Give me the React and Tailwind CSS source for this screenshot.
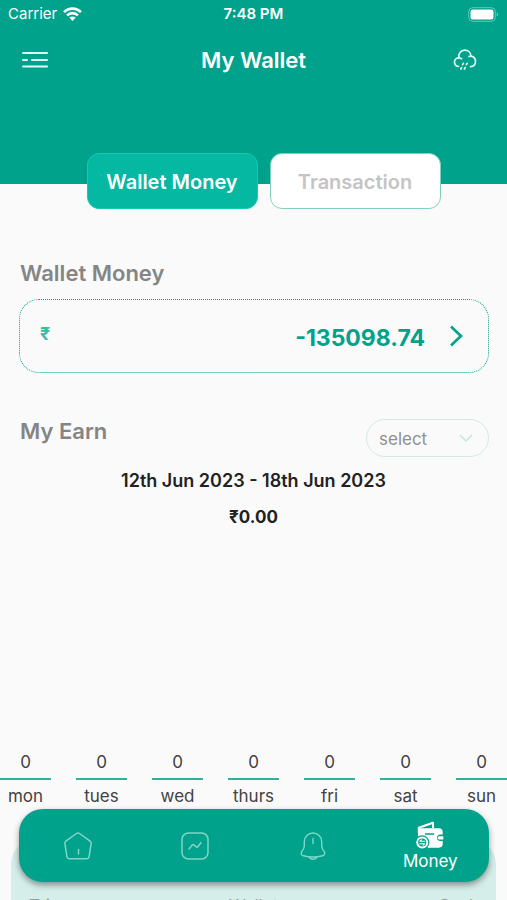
import React, { useState } from 'react';

const DAYS = ['mon', 'tues', 'wed', 'thurs', 'fri', 'sat', 'sun'];

const WifiIcon = () => (
  <svg width="19" height="14" viewBox="0 0 19 14" fill="none" stroke="#fff" strokeWidth="2.600">
    <path d="M1 5.2C5.8.4 13.2.4 18 5.2" />
    <path d="M4 8.4c3.2-3 7.8-3 11 0" />
    <path d="M9.500 14 6.300 10.600c1.800-1.600 4.600-1.600 6.400 0z" fill="#fff" stroke="none" />
  </svg>
);

const BatteryIcon = () => (
  <svg width="31" height="15" viewBox="0 0 31 15">
    <rect x="0.700" y="0.700" width="26.600" height="13.600" rx="4" fill="none" stroke="#fff" strokeOpacity="0.4" />
    <rect x="2.500" y="2.500" width="23" height="10" rx="2.300" fill="#fff" />
    <path d="M28.800 5.500v4c1.600-.6 1.600-3.400 0-4z" fill="#fff" fillOpacity="0.5" />
  </svg>
);

const MenuIcon = () => (
  <svg width="26" height="18" viewBox="0 0 26 18" stroke="#e0fbf5" strokeWidth="2" strokeLinecap="round">
    <path d="M1 2h24M1 9h4M10 9h15M1 15.500h24" />
  </svg>
);

const CloudIcon = () => (
  <svg width="24" height="22" viewBox="0 0 24 22" fill="none" stroke="#e0fbf5" strokeWidth="1.700" strokeLinecap="round" strokeLinejoin="round">
    <path d="M5.500 17.500C3 17.200 1.500 15.300 1.500 13s1.700-4.200 4.500-4.200C4.800 4.600 8 1.200 11.700 1.200c3.500 0 6.200 2.500 6.300 6 2.600.4 4.500 2.500 4.500 5.200 0 2.900-2 4.900-5 5.200" />
    <path d="M6 9c1 0 1.900.3 2.600.8M18 7.200c-.7 0-1.300.1-1.900.4" />
    <path d="M10.400 14.300l-.8 1.400M14.200 14.300l-.8 1.400M8.600 18.600l-.8 1.400M12.200 18.600l-.8 1.400" />
  </svg>
);

const HomeIcon = () => (
  <svg width="28" height="28" viewBox="0 0 28 28" fill="none" stroke="currentColor" strokeWidth="1.500" strokeLinecap="round" strokeLinejoin="round">
    <path d="M12.400 1.500 1.900 9.100c-.8.600-1.200 1.500-1 2.500l2 12.900c.2 1.400 1.200 2.300 2.600 2.300h17c1.400 0 2.400-.9 2.600-2.300l2-12.900c.2-1-.2-1.900-1-2.500L15.600 1.500c-1-.7-2.200-.7-3.200 0z" />
    <path d="M14.500 17.500v4.500" />
  </svg>
);

const ChartIcon = () => (
  <svg width="28" height="28" viewBox="0 0 28 28" fill="none" stroke="currentColor" strokeWidth="1.500" strokeLinecap="round" strokeLinejoin="round">
    <rect x="1" y="1" width="26" height="26" rx="6.500" />
    <path d="M8 17l3.200-4c.4-.5 1-.5 1.500-.2l2.600 2.100c.5.4 1.100.3 1.500-.2L20 10.700" />
  </svg>
);

const BellIcon = () => (
  <svg width="26" height="28" viewBox="0 0 26 28" fill="none" stroke="currentColor" strokeWidth="1.400" strokeLinecap="round" strokeLinejoin="round">
    <path d="M13 1C8.200 1 4.300 4.900 4.300 9.700v4.100c0 .9-.4 2.200-.8 3L1.700 19.600c-1 1.800-.3 3.600 1.600 4.200 6.300 1.600 13.100 1.600 19.400 0 1.800-.5 2.600-2.500 1.600-4.200l-1.800-2.800c-.4-.8-.8-2.100-.8-3V9.700C21.700 4.900 17.800 1 13 1z" />
    <path d="M9.200 24.800c.5 1.600 2 2.500 3.800 2.500s3.300-.9 3.800-2.500M13 6.500v5" />
  </svg>
);

const WalletIcon = () => (
  <svg width="28" height="28" viewBox="0 0 28 28" fill="none" strokeLinejoin="round">
    <path d="M2.800 12V6.800L17 1.800v5.500" stroke="#fff" strokeWidth="2" />
    <path d="M2 9.500c0-1.400 1-2.200 2.400-2.200H23c2.200 0 3.700 1.400 3.700 3.400v2.800h-2.400c-2 0-3.400 1.400-3.400 3.200s1.400 3.200 3.400 3.200h2.400v3.200c0 2.200-1.500 3.600-3.700 3.600H12L2 15z" fill="#fff" />
    <path d="M23.300 15.300h4v3.200h-4c-2.200 0-2.200-3.200 0-3.200z" fill="#fff" />
    <path d="M9.500 13h8" stroke="#00a28b" strokeWidth="1.600" strokeLinecap="round" />
    <circle cx="6.200" cy="21.500" r="7.200" fill="#00a28b" />
    <circle cx="6.200" cy="21.500" r="5" fill="#00a28b" stroke="#fff" strokeWidth="1.900" />
    <path d="M8.700 20.200H3.900l1.500-1.300M3.800 22.800h4.800l-1.500 1.300" stroke="#fff" strokeWidth="1.100" strokeLinecap="round" />
  </svg>
);

const Header = () => (
  <header className="h-[184px] shrink-0 bg-[#00a28b] text-white">
    <div className="grid grid-cols-3 items-center h-7 px-2">
      <div className="flex items-center gap-1.5 text-[15px]">
        <span>Carrier</span>
        <WifiIcon />
      </div>
      <span className="text-center text-[15px] font-semibold">7:48 PM</span>
      <div className="flex justify-end">
        <BatteryIcon />
      </div>
    </div>
    <div className="grid grid-cols-[1fr_auto_1fr] items-center h-16 pl-[22px] pr-[22px]">
      <button type="button" aria-label="Menu" className="justify-self-start">
        <MenuIcon />
      </button>
      <h1 className="text-[22px] font-semibold">My Wallet</h1>
      <button type="button" aria-label="Weather" className="justify-self-end pr-2">
        <CloudIcon />
      </button>
    </div>
  </header>
);

const BottomNav = () => (
  <nav className="absolute left-[19px] right-[18px] bottom-[18px] h-[73px] grid grid-cols-4 rounded-[24px] bg-[#00a28b] text-[#7fd6c8] shadow-[0_3px_6px_rgba(0,0,0,0.4)]">
    <button type="button" aria-label="Home" className="flex items-center justify-center">
      <HomeIcon />
    </button>
    <button type="button" aria-label="Stats" className="flex items-center justify-center">
      <ChartIcon />
    </button>
    <button type="button" aria-label="Notifications" className="flex items-center justify-center">
      <BellIcon />
    </button>
    <button type="button" className="flex flex-col items-center justify-center pt-0.5 text-white">
      <WalletIcon />
      <span className="text-[17px] leading-6">Money</span>
    </button>
  </nav>
);

const App = () => {
  const [tab, setTab] = useState('wallet');

  const tabClass = (name) =>
    tab === name
      ? 'bg-[#04b8a2] border-[#12cbb2] text-white'
      : 'bg-white border-[#7fd0bd] text-[#c4c4c4]';

  return (
    <div className="relative h-screen overflow-hidden bg-[#fafafa] font-['Inter',sans-serif]">
      <main className="h-full flex flex-col overflow-y-auto [scrollbar-width:none]">
        <Header />

        {/* Tabs */}
        <div className="-mt-[31px] shrink-0 flex justify-center gap-3 pl-5">
          <button
            type="button"
            onClick={() => setTab('wallet')}
            className={`w-[171px] h-14 pt-0.5 rounded-xl border text-[20px] font-semibold ${tabClass('wallet')}`}
          >
            Wallet Money
          </button>
          <button
            type="button"
            onClick={() => setTab('transaction')}
            className={`w-[171px] h-14 pt-0.5 rounded-xl border text-[20px] font-semibold ${tabClass('transaction')}`}
          >
            Transaction
          </button>
        </div>

        {/* Wallet balance */}
        <section className="shrink-0 pl-[19px] pr-[18px] pt-12">
          <h2 className="pl-px text-[22px] leading-8 font-semibold text-[#858585]">Wallet Money</h2>
          <button
            type="button"
            className="mt-2.5 w-full h-[74px] flex items-center rounded-[20px] border border-dotted border-[#00a28b] pl-5 pr-6 text-[#00a28b]"
          >
            <span className="pb-1 text-lg font-bold text-[#3fb9a6]">₹</span>
            <span className="ml-auto pt-1 text-[23px] font-bold">-135098.74</span>
            <svg className="ml-6" width="15" height="22" viewBox="0 0 15 22" fill="none" stroke="currentColor" strokeWidth="2.600">
              <path d="M2 1.500 12 11 2 20.500" />
            </svg>
          </button>
        </section>

        {/* Earnings */}
        <section className="shrink-0 pt-[46px]">
          <div className="flex items-start justify-between pl-5 pr-[18px]">
            <h2 className="text-[22px] leading-6 font-semibold text-[#858585]">My Earn</h2>
            <div className="relative w-[123px]">
              <select
                aria-label="Period"
                className="w-full h-[38px] appearance-none rounded-full border border-[#cfebe4] bg-transparent pl-3 pt-1 text-[17px] text-[#8f8f8f]"
              >
                <option>select</option>
                <option>week</option>
                <option>month</option>
              </select>
              <svg className="absolute right-4 top-[15px] pointer-events-none" width="14" height="9" viewBox="0 0 14 9" fill="none" stroke="#c3e7df" strokeWidth="1.500">
                <path d="M1 1l6 6 6-6" />
              </svg>
            </div>
          </div>
          <p className="mt-3 text-center text-[18px] leading-6 font-semibold text-[#222]">12th Jun 2023 - 18th Jun 2023</p>
          <p className="mt-3 text-center text-[17px] leading-6 font-bold text-[#222]">₹0.00</p>

          <div className="mt-[221px] flex justify-between text-[17px] leading-6 text-[#424242]">
            {DAYS.map((day) => (
              <div key={day} className="w-[51px] flex flex-col items-center">
                <span>0</span>
                <div className="my-1 w-full h-0.5 bg-[#35ad9b]" />
                <span>{day}</span>
              </div>
            ))}
          </div>
        </section>

        {/* Totals */}
        <section className="shrink-0 mx-[11px] mt-8 mb-28 rounded-[24px] bg-[#d5eee9] pt-[54px] pb-4">
          <div className="flex justify-between pl-[18px] pr-[17px] text-[17px] leading-6 text-[#8f9e9b]">
            <span>Trips</span>
            <span>Wallet</span>
            <span>Cash</span>
          </div>
        </section>
      </main>

      <BottomNav />
    </div>
  );
};

export default App;
